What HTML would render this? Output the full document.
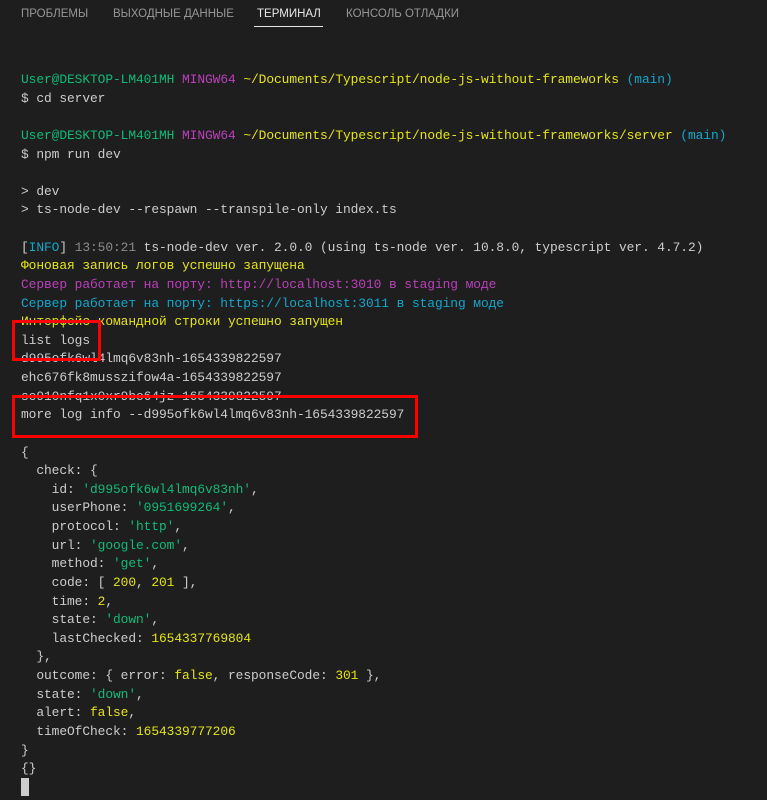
<!DOCTYPE html>
<html><head><meta charset="utf-8"><style>
body{margin:0;width:767px;height:800px;background:#1e1e1e;overflow:hidden;position:relative;font-family:"Liberation Mono","DejaVu Sans Mono",monospace;}
.tab{position:absolute;top:8px;font:11.5px "Liberation Sans","DejaVu Sans",sans-serif;color:#969696;}
.act{color:#e7e7e7;}
.ul{position:absolute;left:254px;top:26px;width:69px;height:1px;background:#e7e7e7;}
pre{position:absolute;left:21px;top:71px;margin:0;font:12.9px/18.62px "Liberation Mono","DejaVu Sans Mono","Noto Sans CJK SC",monospace;letter-spacing:-0.07px;color:#cccccc;}
.g{color:#0dbc79}.m{color:#bc3fbc}.y{color:#e5e510}.c{color:#11a8cd}.s{color:#0dbc79}.n{color:#e5e510}.d{color:#8a8a8a}
.box{position:absolute;border:3px solid #ff0000;}
.cur{position:absolute;left:21px;top:778px;width:8px;height:18px;background:#cccccc;}
</style></head><body>
<div class="tab" style="left:21px">ПРОБЛЕМЫ</div>
<div class="tab" style="left:113px">ВЫХОДНЫЕ ДАННЫЕ</div>
<div class="tab act" style="left:257px">ТЕРМИНАЛ</div>
<div class="tab" style="left:346px">КОНСОЛЬ ОТЛАДКИ</div>
<div class="ul"></div>
<pre><span class="g">User@DESKTOP-LM401MH</span> <span class="m">MINGW64</span> <span class="y">~/Documents/Typescript/node-js-without-frameworks</span> <span class="c">(main)</span>
$ cd server

<span class="g">User@DESKTOP-LM401MH</span> <span class="m">MINGW64</span> <span class="y">~/Documents/Typescript/node-js-without-frameworks/server</span> <span class="c">(main)</span>
$ npm run dev

&gt; dev
&gt; ts-node-dev --respawn --transpile-only index.ts

[<span class="c">INFO</span>] <span class="d">13:50:21</span> ts-node-dev ver. 2.0.0 (using ts-node ver. 10.8.0, typescript ver. 4.7.2)
<span class="y">Фоновая запись логов успешно запущена</span>
<span class="m">Сервер работает на порту: http://localhost:3010 в staging моде</span>
<span class="c">Сервер работает на порту: https://localhost:3011 в staging моде</span>
<span class="y">Интерфейс командной строки успешно запущен</span>
list logs
d995ofk6wl4lmq6v83nh-1654339822597
ehc676fk8musszifow4a-1654339822597
se910nfq1x0xr9bo64jz-1654339822597
more log info --d995ofk6wl4lmq6v83nh-1654339822597

{
  check: {
    id: <span class="s">'d995ofk6wl4lmq6v83nh'</span>,
    userPhone: <span class="s">'0951699264'</span>,
    protocol: <span class="s">'http'</span>,
    url: <span class="s">'google.com'</span>,
    method: <span class="s">'get'</span>,
    code: [ <span class="n">200</span>, <span class="n">201</span> ],
    time: <span class="n">2</span>,
    state: <span class="s">'down'</span>,
    lastChecked: <span class="n">1654337769804</span>
  },
  outcome: { error: <span class="n">false</span>, responseCode: <span class="n">301</span> },
  state: <span class="s">'down'</span>,
  alert: <span class="n">false</span>,
  timeOfCheck: <span class="n">1654339777206</span>
}
{}</pre>
<div class="cur"></div>
<div class="box" style="left:12px;top:320px;width:83px;height:35px"></div>
<div class="box" style="left:12px;top:395px;width:400px;height:37px"></div>
</body></html>
